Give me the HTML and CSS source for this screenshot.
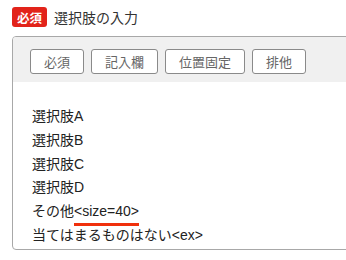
FILE: index.html
```html
<!DOCTYPE html>
<html lang="ja">

<head>
    <meta charset="UTF-8">
    <title>選択肢の入力</title>
    <meta name="viewport" content="width=device-width, initial-scale=1.0">
    <link rel="stylesheet" href="styles.css">
</head>

<body>
    <div class="field-header">
        <span class="required-badge">必須</span>
        <span class="field-title">選択肢の入力</span>
    </div>
    <div class="choice-box">
        <div class="toolbar">
            <button type="button" class="tool-btn">必須</button>
            <button type="button" class="tool-btn">記入欄</button>
            <button type="button" class="tool-btn">位置固定</button>
            <button type="button" class="tool-btn">排他</button>
        </div>
        <div class="choice-list">
            <div class="choice-item">選択肢A</div>
            <div class="choice-item">選択肢B</div>
            <div class="choice-item">選択肢C</div>
            <div class="choice-item">選択肢D</div>
            <div class="choice-item">その他<span class="mark">&lt;size=40&gt;</span></div>
            <div class="choice-item">当てはまるものはない&lt;ex&gt;</div>
        </div>
    </div>
</body>

</html>
```

FILE: styles.css
```css
html,
body {
    margin: 0;
    padding: 0;
}

body {
    width: 346px;
    height: 260px;
    overflow: hidden;
    background: #fff;
    padding: 7px 0 0 12px;
    box-sizing: border-box;
    font-family: 'Liberation Sans', 'Noto Sans CJK JP', sans-serif;
    color: #222;
}

.field-header {
    display: flex;
    align-items: center;
    gap: 7px;
    height: 20px;
}

.required-badge {
    display: flex;
    align-items: center;
    justify-content: center;
    width: 35px;
    height: 20px;
    background: #e2231a;
    color: #fff;
    border-radius: 3px;
    font-size: 12.5px;
    font-weight: 700;
}

.field-title {
    font-size: 14px;
    color: #333;
}

.choice-box {
    margin-top: 9px;
    width: 380px;
    height: 214px;
    box-sizing: border-box;
    border: 1px solid #a8a8a8;
    border-radius: 4px;
    overflow: hidden;
}

.toolbar {
    display: flex;
    gap: 7px;
    background: #f0f0f0;
    padding: 12px 17px 8px 17px;
}

.tool-btn {
    height: 25px;
    padding: 0 13px;
    background: #fff;
    border: 1px solid #8a8a8a;
    border-radius: 3px;
    font-family: 'Liberation Sans', 'Noto Sans CJK JP', sans-serif;
    font-size: 13px;
    color: #666;
    cursor: pointer;
}

.choice-list {
    padding: 23px 19px 0 19px;
}

.choice-item {
    font-size: 14px;
    line-height: 23.8px;
    color: #222;
}

.mark {
    text-decoration: underline;
    text-decoration-color: #f0300c;
    text-decoration-thickness: 3px;
    text-underline-offset: 7px;
}
```
